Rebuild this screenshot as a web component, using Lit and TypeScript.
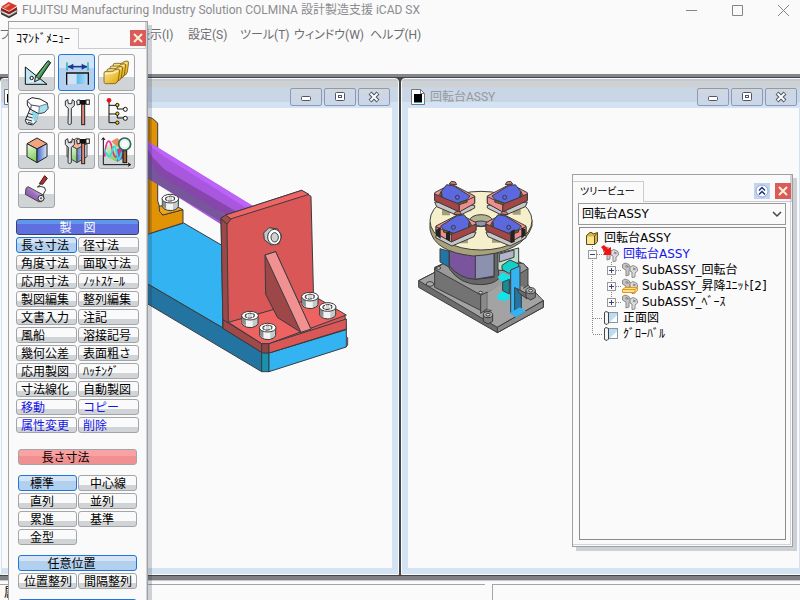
import { LitElement, html, css, svg, nothing } from "lit";
import type { TemplateResult } from "lit";
import { customElement, property, state } from "lit/decorators.js";
import { classMap } from "lit/directives/class-map.js";

/* ---------- tool icons, drawn on a 111 unit square ---------- */

const bolt = svg`
  <path d="M36 48 L62 56 L54 86 L44 96 L26 92 L22 82 Z" fill="#e6f2f8" stroke="#222" stroke-width="3"/>
  <path d="M40 54 L64 58 L56 84 L48 84 Z" fill="#8fd8ea"/>
  <path d="M26 70 L44 75 M24 79 L42 84 M30 88 L44 92 M32 61 L44 65" stroke="#333" stroke-width="3" fill="none"/>
  <path d="M28 22 L42 14 L66 18 L88 30 L90 46 L80 58 L62 62 L36 48 L28 36 Z" fill="#fff" stroke="#222" stroke-width="3"/>
  <path d="M64 40 L88 32 L90 46 L80 58 L62 62 Z" fill="#a8e0ee" stroke="#446" stroke-width="2"/>
  <path d="M28 24 L40 36 L64 40 M40 36 L38 48" fill="none" stroke="#446" stroke-width="3"/>`;

const wrench = svg`
  <path d="M22 24 L22 38 L31 46 L30 92 Q35 98 40 92 L40 46 L49 38 L49 24 L43 20 L41 32 L31 32 L29 20 Z" fill="#dde1e6" stroke="#333" stroke-width="3"/>`;
const hammer = svg`
  <rect x="71" y="34" width="9" height="61" fill="#e08a78" stroke="#222" stroke-width="3"/>
  <path d="M56 24 Q58 20 66 21 L66 34 L58 36 Z" fill="#eee" stroke="#222" stroke-width="3"/>
  <rect x="66" y="21" width="18" height="13" fill="#111"/>
  <rect x="84" y="21" width="10" height="13" fill="#fff" stroke="#222" stroke-width="3"/>`;
const cube = svg`
  <path d="M57 18 L87 35 L57 51 L27 35 Z" fill="#f2a47c" stroke="#222" stroke-width="3"/>
  <path d="M27 35 L57 51 L57 92 L27 74 Z" fill="url(#cubeGreen)" stroke="#222" stroke-width="3"/>
  <path d="M87 35 L57 51 L57 92 L87 74 Z" fill="url(#cubeBlue)" stroke="#222" stroke-width="3"/>`;

const ICONS: Record<string, TemplateResult> = {
  draft: svg`
    <path d="M22 39 L22 91 L87 91 Z" fill="#bfe6f2" stroke="#111" stroke-width="3"/>
    <path d="M30 84 L66 84 L50 70 Z" fill="#eef"/>
    <circle cx="41" cy="72" r="5" fill="#fff" stroke="#111" stroke-width="3"/>
    <path d="M90 20 L98 26 L64 76 L50 83 L53 67 Z" fill="#3d9152" stroke="#111" stroke-width="3"/>
    <path d="M53 67 L64 76 L50 83 Z" fill="#d9d9c8" stroke="#111" stroke-width="2"/>
    <path d="M90 25 L60 68" stroke="#7cc58a" stroke-width="3"/>`,
  dimension: svg`
    <path d="M25 56 H91 V90 H25 Z" fill="#cfe2f5"/>
    <path d="M56 60 H89 V90 H56 Z" fill="url(#sheet)"/>
    <path d="M26 92 V57 H91 V92" fill="none" stroke="#111" stroke-width="4"/>
    <path d="M27 25 V50 M90 25 V50" stroke="#18aab0" stroke-width="4"/>
    <path d="M30 38 H87" stroke="#18388f" stroke-width="5"/>
    <path d="M29 38 L46 29 V47 Z M88 38 L71 29 V47 Z" fill="#18388f"/>`,
  folders: svg`
    ${[[27, -24], [18, -16], [9, -8], [0, 0]].map(([x, y]) => svg`
      <g transform="translate(${x} ${y})">
        <path d="M18 58 Q18 52 24 52 H42 Q48 52 50 47 L60 45 Q65 45 65 50 L61 78 Q58 88 50 89 L22 89 Q17 88 18 80 Z" fill="url(#gold)" stroke="#5d4300" stroke-width="2"/>
        <path d="M22 60 Q40 59 48 56 L60 51" stroke="#fff3bd" stroke-width="4" fill="none"/>
      </g>`)}`,
  bolt,
  tools: svg`${wrench}${hammer}`,
  tree: svg`
    <path d="M33 26 V89 H58 M33 37 H58 V48 H82 M33 63 H58 V75 H82" fill="none" stroke="#111" stroke-width="3"/>
    <circle cx="33" cy="22" r="7" fill="#e81414"/>
    <g fill="#f2cf12" stroke="#111" stroke-width="3"><circle cx="58" cy="36" r="5"/><circle cx="58" cy="62" r="5"/><circle cx="58" cy="89" r="5"/></g>
    <g fill="#fff" stroke="#111" stroke-width="3"><circle cx="82" cy="49" r="6"/><circle cx="82" cy="76" r="6"/></g>`,
  cube,
  cubeTools: svg`<g opacity="0.8">${cube}</g>${wrench}${hammer}`,
  analysis: svg`
    <path d="M27 40 L57 22 L87 38 V72 L57 90 L27 74 Z" fill="url(#cubeGreen)"/>
    <path d="M57 52 L87 38 V72 L57 90 Z" fill="#5b74c4"/>
    <path d="M40 28 L57 18 L74 30 L57 44 Z" fill="#e98e62"/>
    <path d="M16 98 V18 M11 24 L16 17 L21 24 M16 98 H97 M90 93 L98 98 L90 103" fill="none" stroke="#111" stroke-width="3"/>
    <path d="M20 74 C24 16 36 18 42 48 S56 84 62 60 S68 60 74 80" fill="none" stroke="#ef2b8b" stroke-width="5"/>
    <path d="M20 52 C28 76 36 82 42 58 S52 40 58 70 S66 70 72 60" fill="none" stroke="#2adfe5" stroke-width="5"/>
    <rect x="75" y="56" width="11" height="36" fill="#9a6431" stroke="#111" stroke-width="3"/>
    <circle cx="80" cy="36" r="18" fill="#e5f3f1" stroke="#2f6a57" stroke-width="5"/>
    <circle cx="80" cy="36" r="9" fill="#fff"/>`,
  roller: svg`
    <path d="M80 14 L88 22 L74 40 L64 38 Z" fill="#a83433" stroke="#501010" stroke-width="3"/>
    <path d="M68 40 L58 48 Q70 44 80 50 Q86 58 78 66 L72 78" fill="none" stroke="#333" stroke-width="3"/>
    <path d="M24 52 L30 47 L76 72 L78 84 L70 92 L62 92 L22 70 Z" fill="url(#paint)" stroke="#444" stroke-width="3"/>
    <circle cx="69" cy="82" r="9" fill="#e4e4e4" stroke="#333" stroke-width="3"/>
    <circle cx="69" cy="82" r="3" fill="#555"/>`,
};

const GRADIENTS = svg`
  <defs>
    <linearGradient id="cubeGreen" x1="0" y1="0" x2="0.3" y2="1"><stop offset="0" stop-color="#f2faec"/><stop offset="1" stop-color="#7fcf5a"/></linearGradient>
    <linearGradient id="cubeBlue"><stop offset="0" stop-color="#3e64c4"/><stop offset="1" stop-color="#dfe8fb"/></linearGradient>
    <linearGradient id="sheet"><stop offset="0" stop-color="#58b9ea"/><stop offset="1" stop-color="#b5dcf5"/></linearGradient>
    <linearGradient id="gold" x1="0" y1="0" x2="1" y2="1"><stop offset="0" stop-color="#fbe9a0"/><stop offset="1" stop-color="#e0a800"/></linearGradient>
    <linearGradient id="paint" x1="1" y1="0" x2="0" y2="1"><stop offset="0" stop-color="#fff"/><stop offset="0.5" stop-color="#a070c0"/><stop offset="1" stop-color="#7a3fa6"/></linearGradient>
  </defs>`;

/* ---------- models shown in the drawing windows ---------- */

const screw = (x: number, y: number) => svg`
  <g transform="translate(${x} ${y})" stroke="#383838" stroke-width="3">
    <path d="M-24 0 V24 Q-20 34 0 36 Q20 34 24 24 V0 Z" fill="#c4c9ca"/>
    <path d="M-23 4 V23 L-13 30 V8 Z" fill="#8b9092" stroke="none"/>
    <path d="M-12 10 V32 L8 34 V10 Z" fill="#f2f4f4" stroke="none"/>
    <ellipse rx="25" ry="13" fill="#fff"/>
    <path d="M-14 -3 L0 -8 L13 -4 L12 4 L-2 8 L-14 4 Z" fill="#d3d3d3"/>
    <path d="M-6 -6 L-8 6 M6 -6 L8 6" stroke="#fff"/>
  </g>`;

const BRACKET = svg`
  <g transform="translate(143 -7) scale(0.33333)" stroke="#383c40" stroke-width="3" stroke-linejoin="round">
    <path d="M0 402 L116 366 L236 436 L236 682 L0 544 Z" fill="#34b3f3"/>
    <path d="M0 544 L232 680 L350 754 L350 812 L0 604 Z" fill="#2474a2"/>
    <path d="M350 754 H372 V812 H350 Z" fill="#1a92aa"/>
    <path d="M372 756 L604 684 V738 L372 812 Z" fill="#34b3f3"/>
    <path d="M0 46 L22 52 L38 66 V300 L52 342 L114 326 V366 L0 402 Z" fill="#e29205"/>
    <path d="M0 50 L16 54 V396 L0 402 Z" fill="#b97503" stroke="none"/>
    <path d="M42 316 L78 308 L114 326 L54 342 L44 332 Z" fill="#eda31a"/>
    <path d="M0 122 L10 122 L325 316 L360 350 L250 384 L0 226 Z" fill="#a957df" stroke="none"/>
    <path d="M10 122 L325 316 L306 322 L60 168 L24 142 Z" fill="#bd63fa" stroke="none"/>
    <path d="M0 130 L24 170 L60 206 L275 332 L250 345 L0 226 Z" fill="#8646aa" stroke="none"/>
    <path d="M0 150 L20 190 L45 224 L240 342 L228 362 L0 228 Z" fill="#77569b" stroke="none"/>
    <path d="M228 352 L242 342 L470 268 L498 286 L506 600 L600 644 L604 686 L372 756 L350 754 L234 682 Z" fill="#d95757"/>
    <path d="M242 342 L470 268 L492 280 L256 354 Z" fill="#f06464"/>
    <path d="M228 352 L246 370 L250 664 L234 682 Z" fill="#9d4748"/>
    <path d="M228 352 L242 342 L258 354 L246 370 Z" fill="#a04d43"/>
    <path d="M250 664 L384 626 L506 592 L522 594 L604 642 L372 728 L350 728 Z" fill="#ee6262"/>
    <path d="M234 656 L350 728 V754 L234 682 Z" fill="#a14849"/>
    <path d="M350 728 H372 V756 H350 Z" fill="#8f4545"/>
    <path d="M372 728 L604 654 V684 L372 756 Z" fill="#d95757"/>
    <path d="M360 462 L392 452 L496 682 L468 694 L398 650 L362 580 Z" fill="#9d4748"/>
    <path d="M360 462 L392 452 L498 684 L468 694 Z" fill="#f29191"/>
    <path d="M356 396 L372 380 L398 384 L410 404 L402 428 L378 432 L358 416 Z" fill="#c6c6c6"/>
    <ellipse cx="388" cy="408" rx="20" ry="23" fill="#fff"/>
    <ellipse cx="389" cy="409" rx="11" ry="14" fill="#d2d2d2"/>
    <path d="M604 706 L608 710 V732 L602 738" fill="none"/>
    ${screw(76, 293)}${screw(315, 644)}${screw(368, 680)}${screw(495, 587)}${screw(548, 618)}
  </g>`;

const unit = (x: number, y: number, flip: number) => svg`
  <g transform="translate(${x} ${y}) scale(${flip} 1)" stroke="#3a3a3a" stroke-width="3" stroke-linejoin="round">
    <path d="M-62 18 L-56 32 L10 60 L58 36 V28 Z" fill="#c5c5c5"/>
    <path d="M-62 -10 L-12 -36 L58 0 V22 L12 46 L-62 12 Z" fill="#f29292"/>
    <path d="M-62 -6 L12 24 V48 L-62 14 Z" fill="#a34646"/>
    <path d="M12 24 L58 2 V22 L12 48 Z" fill="#f08c8c"/>
    <path d="M-42 -14 L-26 -34 L-4 -30 L44 0 L34 12 L6 22 L-40 4 Z" fill="#5c68dd"/>
    <path d="M-42 -14 L-40 4 L-48 -4 Z M6 22 L34 12 L36 18 L12 26 Z" fill="#6a6a16"/>
    <circle cx="6" cy="4" r="6" fill="#5c68dd"/>
    <path d="M-18 -36 L-12 -44 L0 -42 L4 -34 Z" fill="#e87878"/>
  </g>`;

const foot = (x: number, y: number) => svg`
  <path d="M${x - 14} ${y} V${y + 20} L${x} ${y + 28} L${x + 14} ${y + 20} V${y} Z" fill="#7d7d7d"/>
  <ellipse cx="${x}" cy="${y}" rx="14" ry="9" fill="#a9a9a9"/>
  <ellipse cx="${x}" cy="${y}" rx="6" ry="4" fill="#ddd"/>`;

const TURNTABLE = svg`
  <g transform="translate(2 62) scale(0.33333)" stroke="#3c3c3c" stroke-width="3" stroke-linejoin="round">
    <path d="M26 332 L80 304 L400 392 V412 L262 488 L26 352 Z" fill="#6d6d6d"/>
    <path d="M26 332 L80 304 L340 330 L400 392 L262 472 Z" fill="#a3a3a3"/>
    <path d="M262 472 L400 392 V412 L262 488 Z" fill="#898989"/>
    <path d="M74 292 L110 276 L330 276 L354 294 V346 L230 430 L74 352 Z" fill="#737373"/>
    <path d="M74 298 L110 274 L340 280 L354 296 L218 378 Z" fill="#9a9a9a"/>
    <path d="M212 376 L232 366 V416 L212 430 Z" fill="#8a8a8a"/>
    <path d="M232 368 L282 336 L340 350 V400 L300 436 L232 416 Z" fill="#a3a3a3" stroke="none"/>
    <path d="M90 236 L118 244 V292 L90 276 Z" fill="#2276a4"/>
    <path d="M118 240 V296 Q150 344 210 344 Q250 344 266 326 V240 Z" fill="#666"/>
    <path d="M118 240 V288 Q150 326 196 328 L252 322 V240 Z" fill="#7a549c"/>
    <path d="M196 250 H252 V318 L196 328 Z" fill="#8b91ae"/>
    <path d="M264 250 L326 234 V276 L296 304 L264 300 Z" fill="#bfe0c8"/>
    <path d="M268 252 L312 240 V262 L268 276 Z" fill="#b2b4cc"/>
    <path d="M60 158 V178 Q72 246 190 258 Q340 250 366 168 V150 Z" fill="#a8a27c"/>
    <ellipse cx="213" cy="152" rx="153" ry="88" fill="#f5f0cb"/>
    <ellipse cx="213" cy="152" rx="34" ry="18" fill="#b5b38f"/>
    <path d="M190 158 Q212 148 236 158 Q214 180 190 158 Z" fill="#9397ae"/>
    <path d="M96 118 h24 v18 h-24 Z M160 104 h24 v20 h-24 Z M308 116 h24 v18 h-24 Z M150 206 h24 v14 h-24 Z M246 200 h24 v18 h-24 Z" fill="#a49f7b" stroke="none"/>
    ${unit(136, 78, 1)}${unit(290, 78, -1)}${unit(136, 168, -1)}${unit(290, 168, 1)}
    <path d="M78 180 L92 170 V206 L78 196 Z M108 188 L120 182 V214 L108 208 Z M302 184 L314 178 V216 L302 220 Z M334 172 L346 178 V196 L334 206 Z" fill="#222" stroke="none"/>
    <path d="M276 286 L300 270 L326 282 V300 L296 310 L276 298 Z" fill="#12cfc8"/>
    <path d="M262 322 L278 308 L300 318 V330 L280 338 Z M262 376 L278 364 L298 374 V386 L282 394 L262 386 Z" fill="#0fe5ea" stroke="none"/>
    <path d="M278 336 L298 328 V372 L278 362 Z" fill="#1c8a96"/>
    <path d="M302 300 L330 288 V420 L302 428 Z" fill="#35b2f2"/>
    <path d="M314 352 L334 366 V420 L314 428 Z" fill="#2276a4"/>
    <path d="M298 430 L330 412 L348 424 L318 442 Z" fill="#35b2f2" stroke="none"/>
    <path d="M322 356 L352 372 L372 368 L350 386 L326 368 Z" fill="#6a6a6a"/>
    ${foot(234, 434)}${foot(362, 362)}
    <ellipse cx="60" cy="342" rx="11" ry="7" fill="#aaa"/>
    <ellipse cx="86" cy="294" rx="6" ry="4" fill="#ccc"/>
    <ellipse cx="212" cy="368" rx="6" ry="4" fill="#ccc"/>
  </g>`;

/* ---------- drawing window ---------- */

@customElement("drawing-window")
export class DrawingWindow extends LitElement {
  @property() label = "";
  @property({ attribute: false }) model: unknown = nothing;

  static styles = css`
    :host {
      display: flex;
      flex-direction: column;
      box-sizing: border-box;
      min-width: 0;
      border: 1px solid #fafafa;
      border-radius: 4px 4px 0 0;
      background: #d4e3f3;
      overflow: hidden;
    }
    .bar {
      display: flex;
      align-items: center;
      gap: 2px;
      height: 29px;
      box-sizing: border-box;
      padding: 7px 8px 0;
      background: linear-gradient(#becad6 2px, #cfd0d2 2px 8px, #c9d6e6 8px 23px, #d4e3f3 23px);
      font: 12px/16px Roboto, "Noto Sans CJK JP", sans-serif;
      color: #98989c;
    }
    .label {
      flex: 1;
      margin-left: 2px;
      white-space: nowrap;
      overflow: hidden;
    }
    button {
      flex: none;
      width: 32px;
      height: 18px;
      padding: 0;
      display: grid;
      place-items: center;
      border: 1px solid #8e99b8;
      border-radius: 2px;
      background: linear-gradient(#d3d7dc 4px, #cbd7e7 4px);
    }
    .canvas {
      flex: 1;
      min-height: 0;
      margin: 0 6px 6px;
      background: #fafafa;
    }
    :host([clipped]) .bar {
      padding-left: 2px;
    }
    :host([clipped]) .canvas {
      margin-left: 1px;
    }
    .canvas svg {
      display: block;
      width: 100%;
      height: 100%;
    }
  `;

  render() {
    return html`
      <div class="bar">
        <svg width="16" height="16" viewBox="0 0 16 16" aria-hidden="true">
          <path d="M1.500 .5 H10.500 L14.500 4.500 V15.500 H1.500 Z" fill="#fff" stroke="#777" />
          <path d="M10.500 .5 V4.500 H14.500" fill="none" stroke="#777" />
          <rect x="4" y="5" width="8" height="8" fill="#000" />
          <path d="M4 13.500 H12" stroke="#2aa7c0" />
        </svg>
        <span class="label">${this.label}</span>
        <button aria-label="最小化">
          <svg width="12" height="12"><rect x="1.500" y="5.500" width="9" height="4" rx="1" fill="#fff" stroke="#4d5566" /></svg>
        </button>
        <button aria-label="最大化">
          <svg width="12" height="12">
            <rect x="1.500" y="1.500" width="9" height="8" rx="1" fill="#fff" stroke="#4d5566" />
            <rect x="4.500" y="4.500" width="3" height="2" fill="#fff" stroke="#4d5566" />
          </svg>
        </button>
        <button aria-label="閉じる">
          <svg width="12" height="12">
            <path d="M2 2 L10 10 M10 2 L2 10" stroke="#4d5566" stroke-width="4" />
            <path d="M2.500 2.500 L9.500 9.500 M9.500 2.500 L2.500 9.500" stroke="#fff" stroke-width="2" />
          </svg>
        </button>
      </div>
      <div class="canvas"><svg role="img" aria-label=${this.label}>${this.model}</svg></div>
    `;
  }
}

/* ---------- tree view ---------- */

type Guide = "pass" | "open" | "plus" | "plusEnd" | "tee" | "end";
interface TreeRow {
  text: string;
  icon: "folder" | "active" | "part" | "mirror" | "view";
  guides: Guide[];
}

const ROWS: TreeRow[] = [
  { text: "回転台ASSY", icon: "folder", guides: [] },
  { text: "回転台ASSY", icon: "active", guides: ["open"] },
  { text: "SubASSY_回転台", icon: "part", guides: ["pass", "plus"] },
  { text: "SubASSY_昇降ﾕﾆｯﾄ[2]", icon: "mirror", guides: ["pass", "plus"] },
  { text: "SubASSY_ﾍﾞｰｽ", icon: "part", guides: ["pass", "plusEnd"] },
  { text: "正面図", icon: "view", guides: ["tee"] },
  { text: "ｸﾞﾛｰﾊﾞﾙ", icon: "view", guides: ["end"] },
];

const clamp = svg`
  <g stroke="#8a8a8a" fill="#c6c6c6">
    <path d="M.5 2.500 L3 1 L7 2.500 L8.500 6 L7 9 V13 L4 14 L4 8 L.5 6 Z"/>
    <path d="M8 5 L11 3.500 L15 5.500 L15.500 9 L13 11 V15 L10 15.500 V10 L8 9 Z" fill="#dcdcdc"/>
  </g>
  <path d="M3.500 4 L6.500 5 M11 6.500 L13.500 7.500" stroke="#909090" stroke-width="2"/>`;

const ROW_ICONS = {
  folder: svg`
    <path d="M2.500 5.500 L6 2.500 H8 L9 4 L13.500 2.500 V11.500 L11 14.500 H2.500 Z" fill="#d9b43c" stroke="#57491c"/>
    <path d="M3 6.500 H10.500 V14 H3 Z" fill="#f9e48f"/>
    <path d="M10.500 14 V6 L13 3.500" fill="none" stroke="#57491c"/>`,
  active: svg`${clamp}<path d="M-2 1 L1 -1 L5 3 L8 1 V9 H0 L2 6 Z" fill="#f21414"/>`,
  part: clamp,
  mirror: svg`${clamp}<path d="M.5 11.500 L3 9.500 H15.500 V12.500 L13 14.500 H.5 Z" fill="#ffe08a" stroke="#e09a18"/><path d="M.5 11.500 H13 V14.500 M13 11.500 L15.500 9.500" fill="none" stroke="#e09a18"/>`,
  view: svg`
    <rect x="5.500" y="2.500" width="9" height="10" fill="#bcdcf3" stroke="#8795a5"/>
    <path d="M7 12 L14 5 V12 Z" fill="#fff"/>
    <path d="M1.500 2.500 L3 1.500 L5.500 2.500 V13 L4 14.500 L1.500 13.500 Z" fill="#f6f6f6" stroke="#444"/>`,
};

const guideArt = (g: Guide) => {
  const cont = g === "pass" || g === "open" || g === "plus" || g === "tee";
  const boxed = g === "open" || g === "plus" || g === "plusEnd";
  return html`<svg width="19" height="16" viewBox="0 0 19 16" aria-hidden="true">
    <path d="M8.500 0 V${cont ? 16 : 8}" stroke="#888" stroke-dasharray="1 1" />
    ${g === "pass" ? nothing : svg`<path d="M9 8.500 H19" stroke="#888" stroke-dasharray="1 1"/>`}
    ${boxed
      ? svg`<rect x="4.500" y="4.500" width="8" height="8" fill="#fafafa" stroke="#999"/><path d="M6 8.500 H11" stroke="#3c4478"/>`
      : nothing}
    ${g === "plus" || g === "plusEnd" ? svg`<path d="M8.500 6 V11" stroke="#3c4478"/>` : nothing}
  </svg>`;
};

/* ---------- application ---------- */

const TOOLS: [string, string][] = [
  ["draft", "作図"], ["dimension", "製図"], ["folders", "ファイル"],
  ["bolt", "部品"], ["tools", "ツール"], ["tree", "構成"],
  ["cube", "３次元"], ["cubeTools", "３次元編集"], ["analysis", "解析"],
  ["roller", "表示"],
];
const COMMANDS = [
  "長さ寸法", "径寸法", "角度寸法", "面取寸法", "応用寸法", "ﾉｯﾄｽｹｰﾙ", "製図編集", "整列編集",
  "文書入力", "注記", "風船", "溶接記号", "幾何公差", "表面粗さ", "応用製図", "ﾊｯﾁﾝｸﾞ",
  "寸法線化", "自動製図", "移動", "コピー", "属性変更", "削除",
];
const EDITS = new Set(["移動", "コピー", "属性変更", "削除"]);
const VARIANTS = ["標準", "中心線", "直列", "並列", "累進", "基準", "金型"];
const MENUS = ["ファイル(F)", "編集(E)", "表示(I)", "設定(S)", "ツール(T)", "ウィンドウ(W)", "ヘルプ(H)"];

@customElement("app-root")
export class AppRoot extends LitElement {
  @state() private tool = "dimension";
  @state() private command = "長さ寸法";
  @state() private variant = "標準";

  static styles = css`
    :host {
      position: relative;
      display: flex;
      flex-direction: column;
      height: 100vh;
      overflow: hidden;
      background: #fafafa;
      color: #000;
      font: 12px/16px Roboto, "Noto Sans CJK JP", sans-serif;
    }
    * {
      box-sizing: border-box;
    }
    button,
    select {
      margin: 0;
      padding: 0;
      font: inherit;
      color: inherit;
    }
    svg {
      display: block;
      flex: none;
    }

    .titlebar {
      display: flex;
      align-items: center;
      height: 20px;
      color: #8c8c8f;
    }
    .titlebar h1 {
      flex: 1;
      margin: 0 0 0 4px;
      font-size: 12px;
      font-weight: 400;
      white-space: nowrap;
    }
    .titlebar button {
      width: 46px;
      height: 20px;
      border: 0;
      background: none;
      display: grid;
      place-items: center;
    }
    .titlebar .controls {
      display: flex;
      margin-right: -6px;
    }
    .menubar {
      display: grid;
      grid-template-columns: 74px 64px 50px 52px 54px 76px auto;
      height: 54px;
      padding-top: 7px;
      color: #6c6c70;
      font-feature-settings: "palt";
    }
    .menubar a {
      color: inherit;
      text-decoration: none;
      white-space: nowrap;
    }

    .mdi {
      flex: 1;
      min-height: 0;
      display: grid;
      grid-template-columns: calc(50% - 4px) minmax(0, 1fr);
      gap: 2px;
      margin-right: -6px;
      padding-top: 1px;
      background: #454548;
      border-top: 3px solid #85858a;
      border-bottom: 4px solid #808084;
      box-shadow: inset 0 -1px #454548;
    }
    .mdi drawing-window {
      margin-bottom: 1px;
    }

    .status {
      display: grid;
      grid-template-columns: 485px 1fr;
      gap: 7px;
      height: 20px;
      padding-top: 3px;
      border-top: 1px solid #c8c8c8;
      line-height: 14px;
    }
    .status div {
      border-top: 1px solid #a5a5a5;
      padding: 1px 4px;
    }
    .status div + div {
      border-left: 1px solid #a5a5a5;
    }

    .floating {
      position: absolute;
      display: flex;
      flex-direction: column;
      background: #fafafa;
      border: 1px solid #a0a0a3;
      box-shadow: 4px 4px rgba(25, 45, 65, 0.2);
    }
    .head {
      display: flex;
      align-items: flex-end;
      height: 27px;
      flex: none;
      border-right: 2px solid #d0d3d7;
    }
    .tab {
      height: 21px;
      margin: 0;
      border: solid #c8ccd2;
      border-width: 1px 1px 0 0;
      padding: 2px 8px 0 7px;
      font-size: 12px;
      font-weight: 400;
      font-feature-settings: "palt";
      white-space: nowrap;
    }
    .tree-view .tab {
      font-size: 10px;
    }
    .head .line {
      flex: 1;
      align-self: stretch;
      display: flex;
      align-items: flex-start;
      justify-content: flex-end;
      gap: 5px;
      padding-top: 8px;
      border-bottom: 1px solid #c8ccd2;
      margin-right: -1px;
    }
    .head button {
      width: 16px;
      height: 16px;
      border: 0;
      display: grid;
      place-items: center;
      background: #db5a5a;
    }
    .head .roll {
      background: #c4d4ee;
    }

    .commands {
      left: 8px;
      top: 21px;
      width: 140px;
      height: 640px;
    }
    .body {
      flex: 1;
      padding: 5px 7px 0;
      border-right: 1px solid #d0d3d7;
      font-family: "Noto Sans CJK JP", sans-serif;
    }
    .tools {
      display: grid;
      grid-template-columns: repeat(3, 37px);
      gap: 2px 3px;
      margin: 0 2px 11px;
    }
    .tools button {
      height: 37px;
      border: 1px solid #a3a5a8;
      border-radius: 3px;
      background: linear-gradient(#fafafa 64%, #d1d4d7 64%);
    }
    .tools button.on {
      border-color: #1f77dd;
      background: linear-gradient(#d3e4f4 36%, #b5d0ee 36%);
    }
    .cmd {
      height: 16px;
      border: 1px solid #a3a5a8;
      border-radius: 3px;
      background: linear-gradient(#fafafa 9px, #d1d4d7 9px);
      line-height: 14px;
      text-align: left;
      padding: 0 4px;
      white-space: nowrap;
      overflow: hidden;
    }
    .cmd.edit {
      color: #1414e6;
    }
    .cmd.on {
      border-color: #1f77dd;
      background: linear-gradient(#d5e4f4 5px, #b1cfef 5px);
    }
    .group {
      display: block;
      width: 100%;
      margin: 0 0 2px;
      font-size: 12px;
      font-weight: 400;
      text-align: center;
    }
    .group.main {
      border-color: #3b4064;
      background: linear-gradient(#5f97ec 4px, #606fe0 4px);
      color: #fff;
    }
    .group.sub {
      background: linear-gradient(#f8a2a2 6px, #f19090 6px);
      margin-bottom: 10px;
      padding-right: 28px;
    }
    .pairs {
      display: grid;
      grid-template-columns: 1fr 1fr;
      gap: 2px 1px;
    }
    .options {
      margin: 16px 2px 0;
    }
    .options .cmd {
      padding-left: 11px;
    }
    .options .group {
      padding-left: 4px;
    }
    .options .place {
      margin-top: 10px;
      padding-right: 16px;
    }
    .options .snug .cmd {
      padding-left: 5px;
    }
    .options .last {
      margin-top: 10px;
    }

    .tree-view {
      left: calc(100% - 228px);
      top: 174px;
      width: 221px;
      height: 373px;
    }
    .tree-view .body {
      display: flex;
      flex-direction: column;
      gap: 2px;
      padding: 1px 4px 4px 5px;
      border-bottom: 1px solid #d0d3d7;
      margin: 0 1px 1px 0;
      font-family: "DejaVu Sans", "Noto Sans CJK JP", sans-serif;
    }
    .combo {
      display: grid;
      align-items: center;
    }
    .combo select,
    .combo svg {
      grid-area: 1 / 1;
    }
    .combo select {
      width: 100%;
      height: 22px;
      padding-left: 3px;
      appearance: none;
      border: 1px solid #9a9a9c;
      border-radius: 0;
      background: #fafafa;
    }
    .combo svg {
      justify-self: end;
      margin-right: 3px;
      pointer-events: none;
    }
    .tree {
      flex: 1;
      margin: 0 0 0 1px;
      padding: 2px 4px;
      list-style: none;
      border: 1px solid #8a8a8d;
    }
    .tree li {
      display: flex;
      height: 16px;
      white-space: nowrap;
    }
    .tree li svg {
      overflow: visible;
    }
    .tree li span {
      margin-left: 4px;
    }
    .tree li.active {
      color: #1414e6;
    }
    .tree button {
      border: 0;
      background: none;
    }
  `;

  private cross() {
    return html`<svg width="10" height="10" aria-hidden="true"><path d="M1 1 L9 9 M9 1 L1 9" stroke="#f8f0d4" stroke-width="2" /></svg>`;
  }

  private pick(label: string, on: boolean, run: () => void) {
    return html`<button class=${classMap({ cmd: true, on, edit: EDITS.has(label) })} @click=${run}>${label}</button>`;
  }

  render() {
    return html`
      <header class="titlebar">
        <svg width="18" height="18" viewBox="0 0 54 54" aria-hidden="true">
          <path d="M3 34 L27 46 L51 32 V38 L27 52 L3 40 Z" fill="#333" />
          <path d="M3 28 L27 38 L51 26 V32 L27 46 L3 34 Z" fill="#ddd" stroke="#555" stroke-width="2" />
          <path d="M3 20 L27 32 L51 18 V26 L27 40 L3 28 Z" fill="#8d1e17" />
          <path d="M3 18 L26 3 L51 14 L27 30 Z" fill="#d5382b" />
          <path d="M10 18 L26 8 L32 11 L16 22 Z" fill="#f08a78" />
        </svg>
        <h1>FUJITSU Manufacturing Industry Solution COLMINA 設計製造支援 iCAD SX</h1>
        <div class="controls">
          <button aria-label="最小化"><svg width="11" height="11"><path d="M0 5.500 H11" stroke="#858588" /></svg></button>
          <button aria-label="最大化"><svg width="11" height="11"><path d="M.5 .5 H10.500 V10.500 H.5 Z" fill="none" stroke="#858588" /></svg></button>
          <button aria-label="閉じる"><svg width="11" height="11"><path d="M0 0 L11 11 M11 0 L0 11" stroke="#858588" /></svg></button>
        </div>
      </header>
      <nav class="menubar">${MENUS.map((m) => html`<a href="#">${m}</a>`)}</nav>

      <main class="mdi">
        <drawing-window clipped .model=${BRACKET}></drawing-window>
        <drawing-window label="回転台ASSY" .model=${TURNTABLE}></drawing-window>
      </main>
      <footer class="status"><div>属性</div><div></div></footer>

      <section class="floating commands">
        <div class="head">
          <h2 class="tab">ｺﾏﾝﾄﾞﾒﾆｭｰ</h2>
          <div class="line"><button aria-label="閉じる">${this.cross()}</button></div>
        </div>
        <div class="body">
          <svg width="0" height="0" aria-hidden="true">${GRADIENTS}</svg>
          <div class="tools">
            ${TOOLS.map(([id, name]) => html`
              <button class=${classMap({ on: this.tool === id })} aria-label=${name} @click=${() => (this.tool = id)}>
                <svg width="35" height="35" viewBox="3 3 105 105" aria-hidden="true">${ICONS[id]}</svg>
              </button>`)}
          </div>
          <h3 class="cmd group main">製　図</h3>
          <div class="pairs">
            ${COMMANDS.map((c) => this.pick(c, this.command === c, () => (this.command = c)))}
          </div>
          <div class="options">
            <h3 class="cmd group sub">長さ寸法</h3>
            <div class="pairs">
              ${VARIANTS.map((v) => this.pick(v, this.variant === v, () => (this.variant = v)))}
            </div>
            <button class="cmd group on place">任意位置</button>
            <div class="pairs snug">
              <button class="cmd">位置整列</button>
              <button class="cmd">間隔整列</button>
            </div>
            <button class="cmd group on last" aria-label="確定"></button>
          </div>
        </div>
      </section>

      <section class="floating tree-view">
        <div class="head">
          <h2 class="tab">ツリービュー</h2>
          <div class="line">
            <button class="roll" aria-label="折りたたむ">
              <svg width="14" height="14"><circle cx="7" cy="7" r="6" fill="#fff" stroke="#8fa6d8" /><path d="M4 6.500 L7 3.500 L10 6.500 M4 10.500 L7 7.500 L10 10.500" fill="none" stroke="#1c3177" stroke-width="1.500" /></svg>
            </button>
            <button aria-label="閉じる">${this.cross()}</button>
          </div>
        </div>
        <div class="body">
          <div class="combo">
            <select aria-label="表示対象"><option>回転台ASSY</option></select>
            <svg width="12" height="8" aria-hidden="true"><path d="M2 2 L6 6 L10 2" fill="none" stroke="#444" stroke-width="1.500" /></svg>
          </div>
          <ul class="tree">
            ${ROWS.map((r) => html`
              <li class=${classMap({ active: r.icon === "active" })}>
                ${r.guides.map((g) => (g === "open" || g.startsWith("plus")
                  ? html`<button aria-label="${r.text} の開閉">${guideArt(g)}</button>`
                  : guideArt(g)))}
                <svg width="16" height="16" viewBox="0 0 16 16" aria-hidden="true">${ROW_ICONS[r.icon]}</svg>
                <span>${r.text}</span>
              </li>`)}
          </ul>
        </div>
      </section>
    `;
  }
}
